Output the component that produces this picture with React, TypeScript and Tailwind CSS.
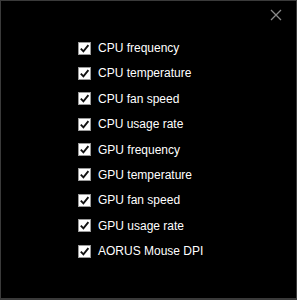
const items = [
  'CPU frequency',
  'CPU temperature',
  'CPU fan speed',
  'CPU usage rate',
  'GPU frequency',
  'GPU temperature',
  'GPU fan speed',
  'GPU usage rate',
  'AORUS Mouse DPI',
];

const CheckBox = () => (
  <span className="flex h-[13px] w-[13px] shrink-0 items-center justify-center border border-[#9a9a9a] bg-white">
    <svg width="11" height="11" viewBox="0 0 11 11">
      <path d="M1.8 5.6 L4.4 8.3 L9.4 2.2" fill="none" stroke="#111" strokeWidth="1.9" />
    </svg>
  </span>
);

export default function App() {
  return (
    <div className="flex h-[300px] w-[297px] flex-col border border-[#3a3a3a] border-b-2 bg-black font-['Liberation_Sans',Arial,sans-serif] text-white">
      <div className="flex h-[40px] justify-end pr-[14px] pt-[8px]">
        <svg width="12" height="12" viewBox="0 0 12 12">
          <path d="M1 1 L11 11 M11 1 L1 11" stroke="#8a8a8a" strokeWidth="1.3" />
        </svg>
      </div>
      <div className="flex flex-col gap-[11.4px] pl-[77px]">
        {items.map((label) => (
          <label key={label} className="flex h-[14px] items-center gap-[7px] text-[12px] leading-none">
            <CheckBox />
            <span>{label}</span>
          </label>
        ))}
      </div>
    </div>
  );
}
